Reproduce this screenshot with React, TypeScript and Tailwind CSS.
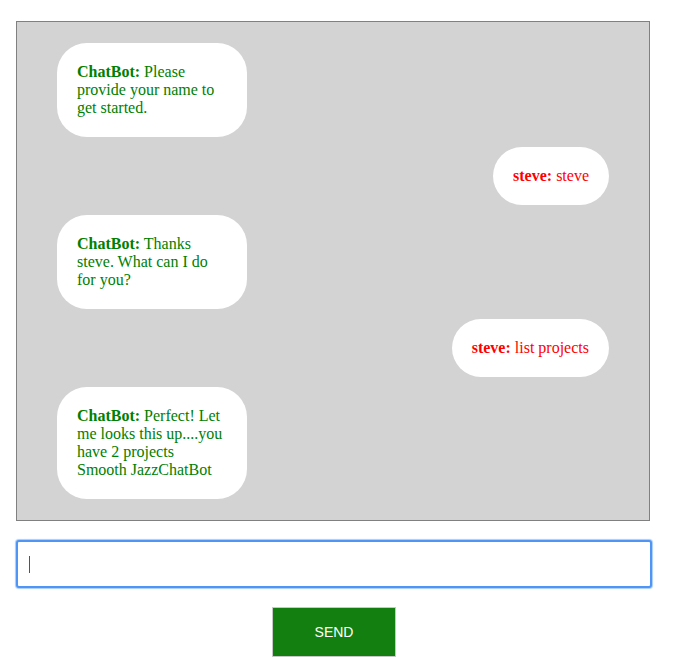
const messages = [
  { from: 'ChatBot', text: 'Please provide your name to get started.' },
  { from: 'steve', text: 'steve' },
  { from: 'ChatBot', text: 'Thanks steve. What can I do for you?' },
  { from: 'steve', text: 'list projects' },
  { from: 'ChatBot', text: 'Perfect! Let me looks this up....you have 2 projects Smooth JazzChatBot' },
];

export default function App() {
  return (
    <div className="min-h-screen bg-white px-4 pt-[21px] font-['Liberation_Serif',serif] text-[16px] leading-[18px]">
      <div className="flex h-[500px] w-[634px] flex-col gap-[10px] border border-[#808080] bg-[#d3d3d3] pt-[21px]">
        {messages.map((m, i) =>
          m.from === 'ChatBot' ? (
            <div key={i} className="ml-10 w-[190px] self-start rounded-[30px] bg-white p-5 text-[#008000]">
              <b>{m.from}:</b> {m.text}
            </div>
          ) : (
            <div key={i} className="mr-10 self-end rounded-[30px] bg-white p-5 text-[#ff0000]">
              <b>{m.from}:</b> {m.text}
            </div>
          )
        )}
      </div>
      <div className="mt-[19px] flex h-[48px] w-[636px] items-center rounded-[3px] border-2 border-[#4f95f5] bg-white pl-[11px] shadow-[0_0_1px_1px_#a8cbfa]">
        <div className="h-[17px] w-px bg-[#555]" />
      </div>
      <div className="flex w-[636px] justify-center pt-[19px]">
        <button className="h-[50px] w-[124px] border border-[#c8c8c8] bg-[#137f10] font-['Liberation_Sans',Arial,sans-serif] text-[14px] text-white">
          SEND
        </button>
      </div>
    </div>
  );
}
